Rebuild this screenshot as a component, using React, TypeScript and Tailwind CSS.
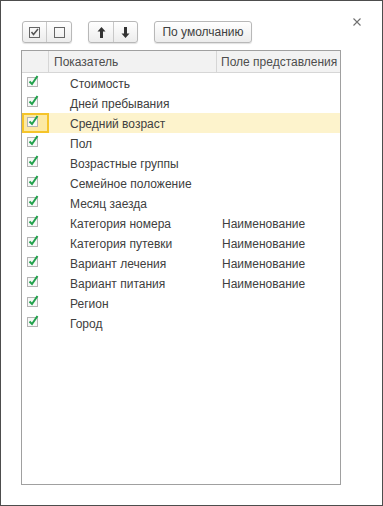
const rows: [string, string][] = [
  ["Стоимость", ""],
  ["Дней пребывания", ""],
  ["Средний возраст", ""],
  ["Пол", ""],
  ["Возрастные группы", ""],
  ["Семейное положение", ""],
  ["Месяц заезда", ""],
  ["Категория номера", "Наименование"],
  ["Категория путевки", "Наименование"],
  ["Вариант лечения", "Наименование"],
  ["Вариант питания", "Наименование"],
  ["Регион", ""],
  ["Город", ""],
];

function CheckIcon() {
  return (
    <svg width="13" height="12" viewBox="0 0 13 12">
      <rect x="0.5" y="2.5" width="10" height="9" fill="#f7f7f7" stroke="#b4b4b4" />
      <path d="M2.5 6.5 L5 9 L10.5 1" fill="none" stroke="#21a24c" strokeWidth="2" />
    </svg>
  );
}

function App() {
  return (
    <div
      className="relative w-[383px] h-[506px] border border-[#4d4d4d] bg-white flex flex-col pt-[20px] pb-[20px] pl-[20px] pr-[41px] text-[12px] text-[#404040]"
      style={{ fontFamily: '"Liberation Sans", Arial, sans-serif' }}
    >
      <button className="absolute right-[20px] top-[16px] w-[10px] h-[10px] flex items-center justify-center">
        <svg width="8" height="8" viewBox="0 0 8 8">
          <path d="M0.5 0.5 L7.5 7.5 M7.5 0.5 L0.5 7.5" stroke="#707070" strokeWidth="1.1" />
        </svg>
      </button>

      <div className="flex items-center h-[22px] ml-[1px]">
        <div className="flex h-[22px] border border-[#b8b8b8] rounded-[3px] bg-gradient-to-b from-white to-[#ececec] shadow-[0_1px_1px_rgba(0,0,0,0.12)]">
          <div className="w-[24px] flex items-center justify-center border-r border-[#c8c8c8]">
            <svg width="11" height="11" viewBox="0 0 11 11">
              <rect x="0.5" y="0.5" width="10" height="10" fill="none" stroke="#666" />
              <path d="M2.5 5 L4.5 7.5 L9 2" fill="none" stroke="#555" strokeWidth="1.5" />
            </svg>
          </div>
          <div className="w-[24px] flex items-center justify-center">
            <svg width="11" height="11" viewBox="0 0 11 11">
              <rect x="0.5" y="0.5" width="10" height="10" fill="none" stroke="#666" />
            </svg>
          </div>
        </div>
        <div className="flex h-[22px] ml-[16px] border border-[#b8b8b8] rounded-[3px] bg-gradient-to-b from-white to-[#ececec] shadow-[0_1px_1px_rgba(0,0,0,0.12)]">
          <div className="w-[25px] flex items-center justify-center border-r border-[#c8c8c8]">
            <svg width="9" height="11" viewBox="0 0 9 11">
              <path d="M4.5 0 L8.5 4.5 L6 4.5 L6 11 L3 11 L3 4.5 L0.5 4.5 Z" fill="#333" />
            </svg>
          </div>
          <div className="w-[23px] flex items-center justify-center">
            <svg width="9" height="11" viewBox="0 0 9 11">
              <path d="M4.5 11 L8.5 6.5 L6 6.5 L6 0 L3 0 L3 6.5 L0.5 6.5 Z" fill="#333" />
            </svg>
          </div>
        </div>
        <div className="flex items-center justify-center h-[22px] w-[98px] ml-[16px] border border-[#b8b8b8] rounded-[3px] bg-gradient-to-b from-white to-[#ececec] shadow-[0_1px_1px_rgba(0,0,0,0.12)] text-[#404040]">
          По умолчанию
        </div>
      </div>

      <div className="mt-[7px] flex-1 border border-[#a0a0a0] flex flex-col">
        <div className="flex h-[22px] bg-[#f2f2f2] border-b border-[#d6d6d6] text-[#4d4d4d]">
          <div className="w-[27px] border-r border-[#d6d6d6]" />
          <div className="w-[168px] border-r border-[#d6d6d6] pl-[5px] flex items-center">Показатель</div>
          <div className="flex-1 pl-[4px] flex items-center">Поле представления</div>
        </div>
        {rows.map(([name, field], i) => {
          const sel = i === 2;
          return (
            <div key={name} className={`flex h-[20px] ${sel ? "bg-[#fdf3cc]" : ""}`}>
              <div
                className={`w-[27px] flex items-center justify-center pb-[4px] pr-[4px] ${
                  sel ? "border-2 border-[#f5c42a] bg-[#fce9a4]" : ""
                }`}
              >
                <CheckIcon />
              </div>
              <div className="w-[168px] pl-[21px] pt-[2px] flex items-center">{name}</div>
              <div className="flex-1 pl-[5px] pt-[2px] flex items-center">{field}</div>
            </div>
          );
        })}
      </div>
    </div>
  );
}

export default App;
